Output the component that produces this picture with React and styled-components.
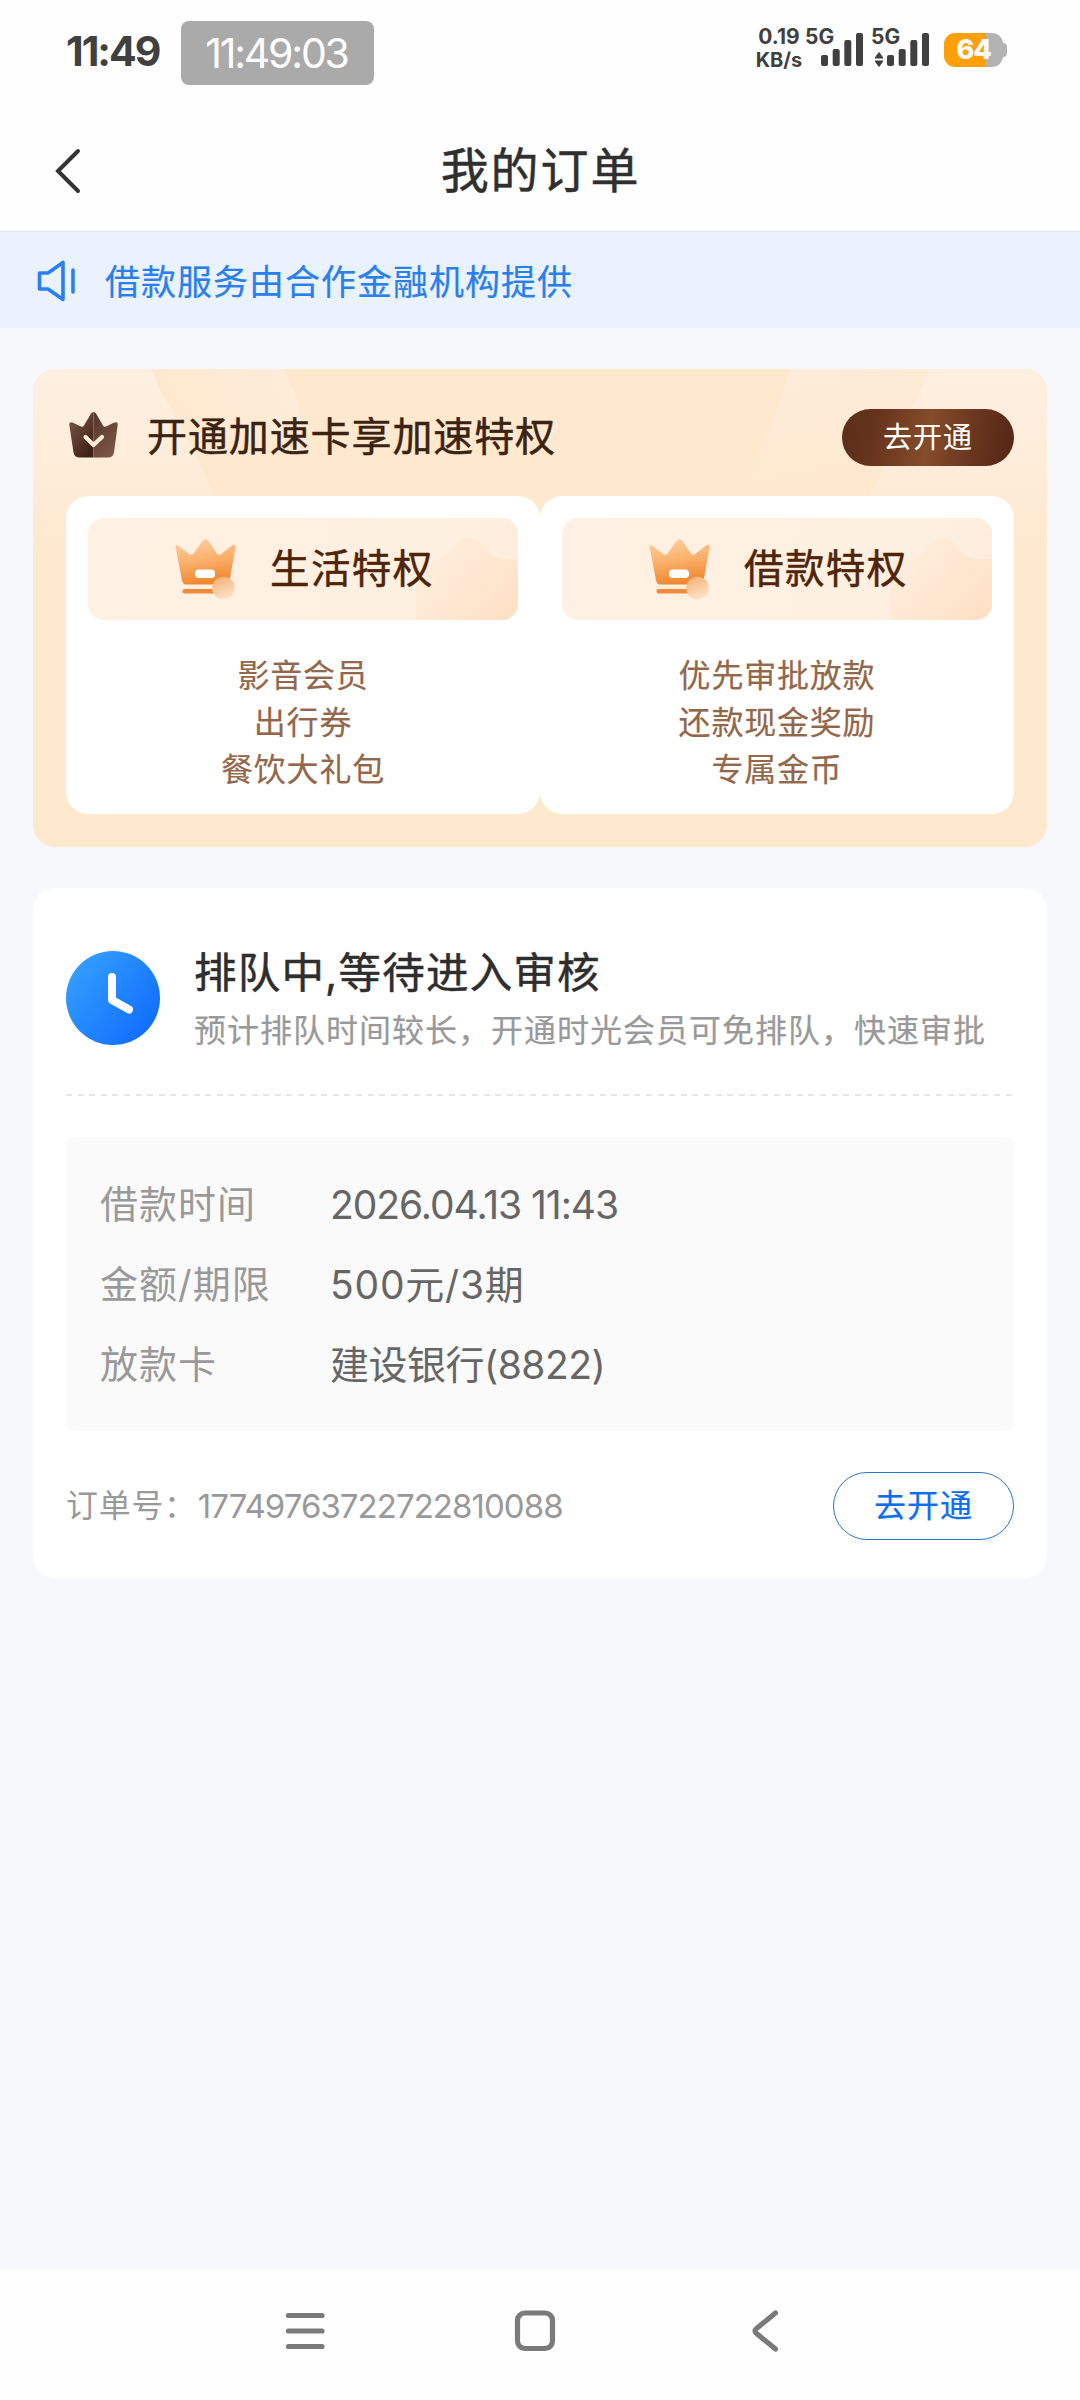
import React from 'react';
import styled, { createGlobalStyle } from 'styled-components';

const GlobalStyle = createGlobalStyle`
  * { box-sizing: border-box; }
  html, body { margin: 0; padding: 0; background: #f6f8fb; }
  body { font-family: Inter, "Noto Sans CJK SC", sans-serif; color: #333; }
`;

const Screen = styled.div`
  width: 1080px;
  height: 2400px;
  display: flex;
  flex-direction: column;
  background: #f6f8fb;
  overflow: hidden;
`;

const T = styled.span`
  display: block;
  white-space: nowrap;
  font-size: ${(p) => p.$size}px;
  line-height: ${(p) => p.$lh || p.$size * 1.2}px;
  letter-spacing: ${(p) => p.$ls || 0}px;
  font-weight: ${(p) => p.$weight || 400};
  color: ${(p) => p.$color || 'inherit'};
  padding-top: ${(p) => p.$drop || 0}px;
  -webkit-text-stroke: ${(p) => p.$stroke || 0}px currentColor;
`;

/* status bar */
const StatusBar = styled.header`
  height: 106px;
  background: #fefefe;
  display: flex;
  align-items: flex-start;
  justify-content: space-between;
  padding: 21px 73px 0 66px;
`;
const StatusLeft = styled.div`
  display: flex;
  gap: 21px;
`;
const Clock = styled(T)`
  width: 94px;
  padding-top: 5px;
`;
const TimeChip = styled.div`
  width: 193px;
  height: 64px;
  border-radius: 8px;
  background: #aaa;
  display: flex;
  align-items: center;
  justify-content: center;
  padding-right: 2px;
`;
const StatusRight = styled.div`
  display: flex;
  align-items: flex-start;
  padding-top: 6px;
`;
const NetSpeed = styled.div`
  width: 50px;
  display: flex;
  flex-direction: column;
  align-items: center;
  padding-right: 2px;
`;
const Signal = styled.div`
  width: 66px;
  height: 40px;
  display: flex;
`;
const NetLabel = styled(T)`
  width: 15px;
`;
const Bars = styled.svg`
  flex: none;
  overflow: visible;
`;
const Battery = styled.div`
  display: flex;
  align-items: center;
  margin: 6px 0 0 7px;
`;
const BatteryBody = styled.div`
  width: 59px;
  height: 34px;
  border-radius: 11px;
  background: linear-gradient(90deg, #ff9f0a 0 42px, #b3b3b3 42px);
  display: flex;
  align-items: center;
  justify-content: center;
`;
const BatteryTip = styled.div`
  width: 4px;
  height: 14px;
  border-radius: 0 4px 4px 0;
  background: #b3b3b3;
`;

/* title bar */
const TitleBar = styled.div`
  height: 126px;
  background: #fefefe;
  border-bottom: 1px solid #dfe5ee;
  display: grid;
  grid-template-columns: 120px 1fr 120px;
  align-items: center;
`;
const BackIcon = styled.svg`
  margin: 4px 0 0 54px;
`;
const Title = styled.h1`
  margin: 0;
  padding: 5px 0 0 1px;
  text-align: center;
  font-weight: 400;
  font-size: 48px;
  line-height: 60px;
  letter-spacing: 1.9px;
  color: #2f2f2f;
  -webkit-text-stroke: 0.5px currentColor;
`;

const Notice = styled.div`
  height: 96px;
  background: #eaf2fe;
  display: flex;
  align-items: center;
  gap: 28px;
  padding: 2px 36px 0 35px;
`;

const Content = styled.main`
  flex: 1;
  padding: 41px 33px 0;
  display: flex;
  flex-direction: column;
  gap: 41px;
`;

/* privilege card */
const Promo = styled.section`
  position: relative;
  height: 478px;
  border-radius: 22px;
  overflow: hidden;
  background: #fee8ce;
  padding: 0 33px;
`;
const PromoArt = styled.svg`
  position: absolute;
  left: 0;
  top: 0;
`;
const PromoHead = styled.div`
  position: relative;
  height: 127px;
  display: flex;
  align-items: center;
  padding-top: 8px;
`;
const PromoCrown = styled.svg`
  flex: none;
  margin-top: -5px;
`;
const PromoTitle = styled(T)`
  margin-left: 26px;
  flex: 1;
`;
const PromoButton = styled.button`
  width: 172px;
  height: 57px;
  border: 0;
  border-radius: 29px;
  margin-top: 2px;
  padding: 0;
  background: linear-gradient(100deg, #5a2e1b 0%, #66341c 20%, #854c2b 50%, #6a361f 75%, #522514 100%);
  display: flex;
  align-items: center;
  justify-content: center;
  font-family: inherit;
`;
const Perks = styled.div`
  position: relative;
  display: grid;
  grid-template-columns: 1fr 1fr;
`;
const Perk = styled.article`
  height: 318px;
  border-radius: 22px;
  background: #fff;
  padding: 22px 22px 0;
`;
const PerkHead = styled.div`
  position: relative;
  height: 102px;
  border-radius: 16px;
  overflow: hidden;
  background: linear-gradient(95deg, #fef0e2, #fef0e1 80%, #feeddc);
  display: flex;
  align-items: center;
  padding-left: 87px;
  gap: 34px;
`;
const PerkArt = styled.svg`
  position: absolute;
  right: 0;
  top: 0;
`;
const PerkIcon = styled.svg`
  position: relative;
  flex: none;
`;
const PerkName = styled(T)`
  position: relative;
`;
const PerkList = styled.div`
  margin-top: 32px;
  display: flex;
  flex-direction: column;
  align-items: center;
`;

/* order card */
const Order = styled.section`
  height: 690px;
  border-radius: 22px;
  background: #fff;
  padding: 0 33px;
`;
const OrderHead = styled.div`
  height: 206px;
  display: flex;
  padding-top: 56px;
`;
const ClockIcon = styled.svg`
  margin-top: 7px;
  flex: none;
`;
const OrderHeadText = styled.div`
  margin-left: 34px;
`;
const Dashes = styled.div`
  height: 2px;
  background: repeating-linear-gradient(90deg, #e6e6e6 0 6px, transparent 6px 11.6px);
`;
const Details = styled.dl`
  margin: 41px 0 0;
  height: 294px;
  border-radius: 10px;
  background: #fafafa;
  padding: 27px 34px;
`;
const DetailRow = styled.div`
  height: 80px;
  display: grid;
  grid-template-columns: 230px 1fr;
  align-items: center;
`;
const OrderFoot = styled.div`
  margin-top: 41px;
  height: 68px;
  display: flex;
  align-items: center;
  justify-content: space-between;
`;
const OrderNo = styled.div`
  display: flex;
  align-items: center;
  gap: 1px;
`;
const OutlineButton = styled.button`
  width: 181px;
  height: 68px;
  border: 1.5px solid #2a72cc;
  border-radius: 34px;
  background: #fff;
  padding: 0;
  display: flex;
  align-items: center;
  justify-content: center;
  font-family: inherit;
`;

const NavBar = styled.nav`
  height: 130px;
  background: #fefefe;
  display: flex;
  align-items: flex-start;
  padding: 37px 0 0 282px;
`;
const NavIcon = styled.svg`
  flex: none;
  margin-left: ${(p) => p.$gap || 0}px;
  fill: none;
  stroke: #7a7a7a;
  stroke-width: 5.2;
  stroke-linecap: round;
  stroke-linejoin: round;
`;

function SignalBars({ active }) {
  return (
    <Bars width="44" height="40" viewBox="0 0 44 40" fill="#404040">
      <rect x="1" y="28" width="7" height="11" rx="2" />
      <rect x="12.7" y="22" width="7" height="17" rx="2" />
      <rect x="24.3" y="13" width="7" height="26" rx="2" />
      <rect x="36" y="6" width="7" height="33" rx="2" />
      {active && (
        <g stroke="#404040" strokeWidth="1" strokeLinejoin="round">
          <path d="M-7 25.500 L-3 31 H-11 Z" />
          <path d="M-7 39.500 L-3 34 H-11 Z" />
        </g>
      )}
    </Bars>
  );
}

function CrownBadge() {
  return (
    <PromoCrown width="55" height="50" viewBox="0 0 55 50">
      <defs>
        <linearGradient id="badge-left" x1="0" y1="0" x2="0.7" y2="1">
          <stop offset="0" stopColor="#7d5d4e" />
          <stop offset="1" stopColor="#3f2014" />
        </linearGradient>
        <linearGradient id="badge-right" x1="0" y1="0" x2="0.6" y2="1">
          <stop offset="0" stopColor="#55352a" />
          <stop offset="1" stopColor="#7b5546" />
        </linearGradient>
      </defs>
      <path d="M27.500 3 Q26 3 25 4.500 L18 16.500 Q17 18.500 15 17.500 L6.500 13.500 Q3 12.500 3.300 16 L7.500 43.500 Q8.500 48.500 13.500 48.500 H27.500 Z" fill="url(#badge-left)" />
      <path d="M27.500 3 Q29 3 30 4.500 L37 16.500 Q38 18.500 40 17.500 L48.500 13.500 Q52 12.500 51.700 16 L48 43.500 Q47 48.500 42 48.500 H27.500 Z" fill="url(#badge-right)" />
      <path d="M19.500 28 L27.500 36 L36 28" fill="none" stroke="#fdebd9" strokeWidth="4.200" strokeLinecap="round" strokeLinejoin="round" />
    </PromoCrown>
  );
}

function PerkCrown({ id }) {
  return (
    <PerkIcon width="61" height="64" viewBox="0 0 61 64">
      <defs>
        <linearGradient id={`${id}-body`} x1="0.3" y1="0" x2="0.5" y2="1">
          <stop offset="0" stopColor="#fdcf9f" />
          <stop offset="0.5" stopColor="#faae68" />
          <stop offset="1" stopColor="#ef842c" />
        </linearGradient>
        <linearGradient id={`${id}-coin`} x1="0.2" y1="0" x2="0.6" y2="1">
          <stop offset="0" stopColor="#f6b073" />
          <stop offset="1" stopColor="#fde3cb" />
        </linearGradient>
      </defs>
      <path d="M3 8.500 L15 17.500 Q17 18.500 18.500 16.500 L27.500 4 Q30.500 0.500 33.500 4 L42 16.500 Q43.500 18.500 45.500 17.500 L57.500 8 Q61 7 60.500 11 L54.500 43.500 Q53.500 47.500 50 47.500 L11 47.500 Q8 47.500 7 43.500 L0.800 11 Q0 7 3 8.500 Z" fill={`url(#${id}-body)`} />
      <rect x="7.500" y="52" width="42" height="4.500" rx="2" fill="#f08a3a" />
      <rect x="20" y="32.500" width="20" height="8.500" rx="3.800" fill="#fff" />
      <circle cx="48.500" cy="51" r="11.300" fill={`url(#${id}-coin)`} />
    </PerkIcon>
  );
}

function PerkCard({ id, name, lines }) {
  return (
    <Perk>
      <PerkHead>
        <PerkArt width="110" height="102" viewBox="0 0 110 102">
          <defs>
            <linearGradient id={`${id}-hill`} x1="0" y1="0.2" x2="1" y2="0.9">
              <stop offset="0" stopColor="#feefdf" />
              <stop offset="0.45" stopColor="#fee8d3" />
              <stop offset="1" stopColor="#fde0c4" />
            </linearGradient>
          </defs>
          <path d="M8 102 V50 C8 44 12 42 22 42 C32 42 37 40 43 31 C52 17 67 17 76 30 C83 40 94 43 110 41 V102 Z" fill={`url(#${id}-hill)`} />
        </PerkArt>
        <PerkCrown id={id} />
        <PerkName $size={39.5} $ls={1.4} $drop={2} $stroke={0.5} $color="#4f2408">{name}</PerkName>
      </PerkHead>
      <PerkList>
        {lines.map((line) => (
          <T key={line} $size={32} $lh={47} $ls={0.8} $stroke={0.2} $color="#93674a">{line}</T>
        ))}
      </PerkList>
    </Perk>
  );
}

const details = [
  { label: '借款时间', value: '2026.04.13 11:43', ls: -1.05 },
  { label: '金额/期限', value: '500元/3期', ls: 0.8 },
  { label: '放款卡', value: '建设银行(8822)', ls: -0.5 },
];

export default function App() {
  return (
    <Screen>
      <GlobalStyle />
      <StatusBar>
        <StatusLeft>
          <Clock $size={41} $lh={50} $weight={700} $ls={-2} $color="#404040">11:49</Clock>
          <TimeChip>
            <T $size={41} $color="#fff" $ls={-2.2} $drop={2}>11:49:03</T>
          </TimeChip>
        </StatusLeft>
        <StatusRight>
          <NetSpeed>
            <T $size={21} $lh={19} $weight={700} $color="#404040">0.19</T>
            <T $size={20} $lh={28} $weight={700} $color="#404040">KB/s</T>
          </NetSpeed>
          <Signal>
            <NetLabel $size={21} $lh={20} $weight={700} $color="#404040">5G</NetLabel>
            <SignalBars />
          </Signal>
          <Signal>
            <NetLabel $size={21} $lh={20} $weight={700} $color="#404040">5G</NetLabel>
            <SignalBars active />
          </Signal>
          <Battery>
            <BatteryBody>
              <T $size={27} $weight={800} $color="#fff" $ls={-1.2} $drop={1}>64</T>
            </BatteryBody>
            <BatteryTip />
          </Battery>
        </StatusRight>
      </StatusBar>

      <TitleBar>
        <BackIcon width="28" height="48" viewBox="0 0 28 48" fill="none" stroke="#333" strokeWidth="4" strokeLinecap="round">
          <path d="M24 4 L4 24 L24 44" />
        </BackIcon>
        <Title>我的订单</Title>
      </TitleBar>

      <Notice>
        <svg width="42" height="44" viewBox="0 0 42 44" fill="none" stroke="#2a7ff2" strokeWidth="3.600" strokeLinejoin="round" strokeLinecap="round">
          <path d="M4.500 14 H13 L28 3.500 V40.500 L13 30 H4.500 Z" />
          <path d="M38 11 V33" />
        </svg>
        <T $size={35} $ls={1} $drop={1} $stroke={0.2} $color="#2a7fee">借款服务由合作金融机构提供</T>
      </Notice>

      <Content>
        <Promo>
          <PromoArt width="1014" height="180" viewBox="0 0 1014 180">
            <defs>
              <linearGradient id="beam" x1="0" y1="0" x2="0" y2="1">
                <stop offset="0" stopColor="#feefe0" />
                <stop offset="0.6" stopColor="#feecd9" />
                <stop offset="1" stopColor="#fee8ce" />
              </linearGradient>
              <linearGradient id="glint-left" x1="0" y1="0.5" x2="1" y2="0.2">
                <stop offset="0" stopColor="#feeddb" stopOpacity="0" />
                <stop offset="1" stopColor="#feeddb" stopOpacity="0.9" />
              </linearGradient>
              <linearGradient id="glint-right" x1="0.1" y1="0" x2="0.4" y2="1">
                <stop offset="0" stopColor="#feeddb" stopOpacity="0.9" />
                <stop offset="1" stopColor="#feeddb" stopOpacity="0" />
              </linearGradient>
            </defs>
            <path d="M119 0 H250 C262 18 266 36 268 54 L274 76 L150 62 C138 38 126 22 119 0 Z" fill="url(#glint-left)" />
            <path d="M758 0 H896 L878 44 L836 127 H708 C724 96 744 40 758 0 Z" fill="url(#glint-right)" />
            <path d="M0 0 H119 C126 22 132 30 138 38 C150 62 166 90 182 127 V180 H0 Z" fill="url(#beam)" />
            <path d="M1014 0 H896 C890 18 880 34 878 44 L836 127 V180 H1014 Z" fill="url(#beam)" />
          </PromoArt>
          <PromoHead>
            <CrownBadge />
            <PromoTitle $size={40} $ls={0.9} $drop={1} $stroke={0.5} $color="#3b2313">开通加速卡享加速特权</PromoTitle>
            <PromoButton>
              <T $size={29} $ls={1} $drop={2} $color="#fff">去开通</T>
            </PromoButton>
          </PromoHead>
          <Perks>
            <PerkCard id="life" name="生活特权" lines={['影音会员', '出行券', '餐饮大礼包']} />
            <PerkCard id="loan" name="借款特权" lines={['优先审批放款', '还款现金奖励', '专属金币']} />
          </Perks>
        </Promo>

        <Order>
          <OrderHead>
            <ClockIcon width="94" height="94" viewBox="0 0 94 94">
              <defs>
                <linearGradient id="dial" x1="0" y1="0.1" x2="1" y2="0.9">
                  <stop offset="0.1" stopColor="#349cfe" />
                  <stop offset="1" stopColor="#0b69ff" />
                </linearGradient>
              </defs>
              <circle cx="47" cy="47" r="47" fill="url(#dial)" />
              <path d="M46 26 V49 L63 58.500" fill="none" stroke="#fff" strokeWidth="8" strokeLinecap="round" strokeLinejoin="round" />
            </ClockIcon>
            <OrderHeadText>
              <T $size={42.5} $lh={58} $ls={1.2} $stroke={0.5} $color="#2e2e2e">排队中,等待进入审核</T>
              <T $size={32} $lh={58} $ls={1} $stroke={0.2} $color="#999">预计排队时间较长，开通时光会员可免排队，快速审批</T>
            </OrderHeadText>
          </OrderHead>
          <Dashes />
          <Details>
            {details.map((d) => (
              <DetailRow key={d.label}>
                <T $size={38} $lh={50} $ls={1} $color="#999">{d.label}</T>
                <T $size={39} $lh={50} $ls={d.ls} $drop={1} $color="#666">{d.value}</T>
              </DetailRow>
            ))}
          </Details>
          <OrderFoot>
            <OrderNo>
              <T $size={32} $lh={44} $ls={0.7} $color="#999">订单号：</T>
              <T $size={33} $lh={44} $ls={-0.95} $color="#999">17749763722722810088</T>
            </OrderNo>
            <OutlineButton>
              <T $size={32} $ls={1} $drop={1} $stroke={0.2} $color="#0f6df2">去开通</T>
            </OutlineButton>
          </OrderFoot>
        </Order>
      </Content>

      <NavBar>
        <NavIcon width="48" height="48" viewBox="0 0 48 48">
          <path d="M6.500 8.500 H40 M6.500 24 H40 M6.500 39.500 H40" />
        </NavIcon>
        <NavIcon $gap={181} width="48" height="48" viewBox="0 0 48 48">
          <rect x="6.500" y="6" width="35" height="35.500" rx="7.500" />
        </NavIcon>
        <NavIcon $gap={190} width="34" height="48" viewBox="0 0 34 48">
          <path d="M26.500 6 L7.500 21.500 Q4.500 24 7.500 26.500 L26.500 42" />
        </NavIcon>
      </NavBar>
    </Screen>
  );
}
